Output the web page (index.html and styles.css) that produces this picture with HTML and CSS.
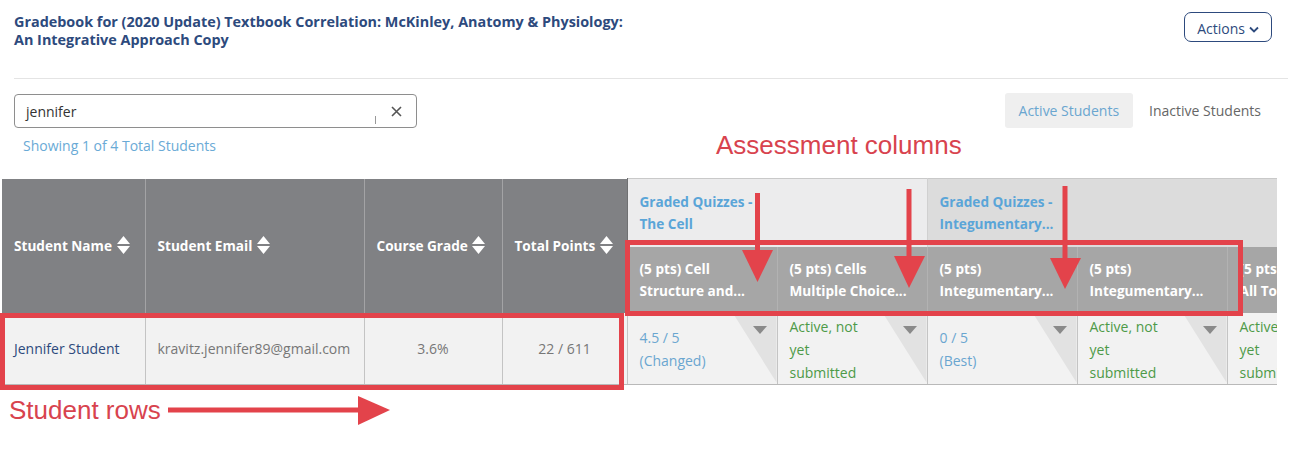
FILE: index.html
```html
<!DOCTYPE html>
<html lang="en">
<head>
<meta charset="utf-8">
<title>Gradebook</title>
<link rel="stylesheet" href="styles.css">
</head>
<body>
<div class="page">
  <header class="top">
    <h1 class="title">Gradebook for (2020 Update) Textbook Correlation: McKinley, Anatomy &amp; Physiology:<br>An Integrative Approach Copy</h1>
    <button class="actions">Actions <svg class="chev" width="10" height="7" viewBox="0 0 10 7"><path d="M1 1.5 L5 5.5 L9 1.5" fill="none" stroke="currentColor" stroke-width="1.8"/></svg></button>
  </header>
  <hr class="divider">
  <div class="toolbar">
    <div class="search-block">
      <div class="search">
        <span class="search-text">jennifer</span>
        <span class="cursor-mark"></span>
        <svg class="clear" width="11" height="11" viewBox="0 0 11 11"><path d="M1 1 L10 10 M10 1 L1 10" stroke="#555" stroke-width="1.6"/></svg>
      </div>
      <div class="showing">Showing 1 of 4 Total Students</div>
    </div>
    <div class="tabs">
      <span class="tab tab-active">Active Students</span>
      <span class="tab">Inactive Students</span>
    </div>
  </div>

  <div class="grid-wrap">
    <table class="grid">
      <colgroup>
        <col class="c-name"><col class="c-email"><col class="c-grade"><col class="c-points">
        <col class="c-a"><col class="c-a"><col class="c-a"><col class="c-a"><col class="c-a">
      </colgroup>
      <thead>
        <tr class="r-group">
          <th rowspan="2" class="fixed-h">Student Name <svg class="sort" width="13" height="18" viewBox="0 0 13 18"><path d="M0 8 L6.5 0 L13 8 Z M0 10 L13 10 L6.5 18 Z" fill="#fff"/></svg></th>
          <th rowspan="2" class="fixed-h">Student Email <svg class="sort" width="13" height="18" viewBox="0 0 13 18"><path d="M0 8 L6.5 0 L13 8 Z M0 10 L13 10 L6.5 18 Z" fill="#fff"/></svg></th>
          <th rowspan="2" class="fixed-h">Course Grade <svg class="sort" width="13" height="18" viewBox="0 0 13 18"><path d="M0 8 L6.5 0 L13 8 Z M0 10 L13 10 L6.5 18 Z" fill="#fff"/></svg></th>
          <th rowspan="2" class="fixed-h">Total Points <svg class="sort" width="13" height="18" viewBox="0 0 13 18"><path d="M0 8 L6.5 0 L13 8 Z M0 10 L13 10 L6.5 18 Z" fill="#fff"/></svg></th>
          <th colspan="2" class="group-h g1">Graded Quizzes -<br>The Cell</th>
          <th colspan="3" class="group-h g2">Graded Quizzes -<br>Integumentary...</th>
        </tr>
        <tr class="r-sub">
          <th class="sub-h">(5 pts) Cell<br>Structure and...</th>
          <th class="sub-h">(5 pts) Cells<br>Multiple Choice...</th>
          <th class="sub-h">(5 pts)<br>Integumentary...</th>
          <th class="sub-h">(5 pts)<br>Integumentary...</th>
          <th class="sub-h">(5 pts)<br>All Topics...</th>
        </tr>
      </thead>
      <tbody>
        <tr>
          <td class="cell-name">Jennifer Student</td>
          <td class="cell-muted">kravitz.jennifer89@gmail.com</td>
          <td class="cell-muted cell-center">3.6%</td>
          <td class="cell-muted cell-center">22 / 611</td>
          <td class="score"><div class="score-text blue">4.5 / 5<br>(Changed)</div><span class="dd"></span></td>
          <td class="score"><div class="score-text green">Active, not<br>yet<br>submitted</div><span class="dd"></span></td>
          <td class="score"><div class="score-text blue">0 / 5<br>(Best)</div><span class="dd"></span></td>
          <td class="score"><div class="score-text green">Active, not<br>yet<br>submitted</div><span class="dd"></span></td>
          <td class="score"><div class="score-text green">Active, not<br>yet<br>submitted</div><span class="dd"></span></td>
        </tr>
      </tbody>
    </table>
  </div>

  <div class="note note-assess">Assessment columns</div>
  <div class="note note-rows">Student rows</div>
  <div class="box box-sub"></div>
  <div class="box box-row"></div>
  <svg class="anno-svg" width="1291" height="472" viewBox="0 0 1291 472">
    <g fill="#e3434b" stroke="none">
      <rect x="755" y="193" width="5" height="60"/>
      <polygon points="742,250 773,250 757.5,282"/>
      <rect x="906.5" y="189" width="5" height="70"/>
      <polygon points="894,256 925,256 909,288"/>
      <rect x="1062.5" y="186" width="5" height="74"/>
      <polygon points="1050,258 1081,258 1065,289"/>
      <rect x="168" y="407.5" width="192" height="5"/>
      <polygon points="358,396 390,410 358,425"/>
    </g>
  </svg>
</div>
</body>
</html>
```

FILE: styles.css
```css
* { box-sizing: border-box; }

body {
  margin: 0;
  background: #fff;
  font-family: "Open Sans", "Noto Sans", Arial, sans-serif;
  font-size: 13px;
  color: #333;
}

.page {
  position: relative;
  width: 1291px;
  height: 472px;
  overflow: hidden;
}

/* ---------- top header ---------- */
.top {
  display: flex;
  justify-content: space-between;
  align-items: flex-start;
  padding: 12px 19px 0 14px;
}

.title {
  margin: 1px 0 0;
  font-size: 14.4px;
  line-height: 18px;
  font-weight: 700;
  color: #2d4a7d;
}

.actions {
  display: flex;
  align-items: center;
  gap: 4px;
  height: 30px;
  padding: 3px 12px 0 12px;
  border: 1px solid #2d4a7d;
  border-radius: 7px;
  background: #fff;
  color: #2d4a7d;
  font-family: inherit;
  font-size: 14px;
}

.chev { margin-top: 2px; }

.divider {
  margin: 29px 3px 0 14px;
  border: 0;
  border-top: 1px solid #e4e4e4;
  height: 0;
}

/* ---------- toolbar ---------- */
.toolbar {
  display: flex;
  justify-content: space-between;
  align-items: flex-start;
  padding: 15px 16px 0 14px;
}

.search {
  display: flex;
  align-items: center;
  width: 403px;
  height: 34px;
  padding: 1px 14px 0 11px;
  border: 1px solid #8e8e8e;
  border-radius: 4px;
}

.search-text {
  flex: 1;
  font-size: 14px;
  color: #333;
}

.cursor-mark {
  width: 1px;
  height: 8px;
  margin: 17px 15px 0 0;
  background: #999;
}

.showing {
  margin-top: 8px;
  padding-left: 9px;
  line-height: 20px;
  font-size: 14px;
  color: #6aaad6;
}

.tabs {
  display: flex;
  align-items: center;
  gap: 2px;
  margin-top: -1px;
}

.tab {
  display: block;
  padding: 1px 14px 0;
  line-height: 34px;
  font-size: 14px;
  color: #666;
  border-radius: 3px;
}

.tab-active {
  background: #efefef;
  color: #6aa6d0;
}

/* ---------- grid ---------- */
.grid-wrap {
  margin: 22px 0 0 2px;
  width: 1275px;
  overflow: hidden;
}

.grid {
  border-collapse: collapse;
  table-layout: fixed;
  width: 1375px;
}

.c-name { width: 143px; }
.c-email { width: 219px; }
.c-grade { width: 138px; }
.c-points { width: 125px; }
.c-a { width: 150px; }

.grid th {
  text-align: left;
  font-weight: 700;
  white-space: nowrap;
  overflow: hidden;
}

.fixed-h {
  background: #808184;
  color: #fff;
  padding: 0 12px;
  vertical-align: middle;
  border-right: 1px solid #a3a3a5;
  font-size: 13.6px;
}

.fixed-h:nth-child(4) { border-right: 1px solid #6f7072; }

.sort {
  vertical-align: -3px;
  margin-left: 1px;
}

.r-group { height: 68px; }
.r-sub { height: 66px; }

.group-h {
  padding: 0 12px;
  vertical-align: middle;
  color: #5aa5d8;
  line-height: 22px;
  font-size: 13.6px;
  border-top: 1px solid #c9c9c9;
}

.g1 { background: #ececed; border-right: 1px solid #d0d0d0; }
.g2 { background: #dcdcdc; }

.sub-h {
  background: #a6a6a6;
  color: #fff;
  padding: 1px 12px 0;
  line-height: 22px;
  font-size: 13.6px;
  vertical-align: middle;
  border-right: 1px solid #b2b2b2;
}

.grid td {
  height: 70px;
  padding: 0 12px;
  background: #f2f2f2;
  border-right: 1px solid #c4c4c4;
  border-bottom: 1px solid #b9b9b9;
  vertical-align: middle;
  white-space: nowrap;
  font-size: 14px;
}

.cell-name { color: #2d4a7d; }
.cell-muted { color: #777; }
.cell-center { text-align: center; }

.score {
  position: relative;
  overflow: hidden;
}

.score::before {
  content: "";
  position: absolute;
  top: 0;
  right: 0;
  width: 44px;
  height: 70px;
  background: #e2e2e2;
  clip-path: polygon(0 0, 100% 0, 100% 100%);
}

.score-text {
  position: relative;
  padding-top: 2px;
  line-height: 23px;
  font-size: 14px;
}

.blue { color: #6aa6d0; }
.green { color: #4d9a48; }

.dd {
  position: absolute;
  top: 13px;
  right: 10px;
  width: 0;
  height: 0;
  border-left: 7px solid transparent;
  border-right: 7px solid transparent;
  border-top: 8px solid #8a8a8a;
}

/* ---------- annotations (overlay) ---------- */
.note {
  position: absolute;
  font-family: "Liberation Sans", Arial, sans-serif;
  font-size: 26px;
  color: #d8434e;
  line-height: 30px;
}

.note-assess { left: 716px; top: 130px; }
.note-rows { left: 9px; top: 395px; }

.box {
  position: absolute;
  border: 5px solid #e3434b;
}

.box-sub { left: 625px; top: 240px; width: 618px; height: 76px; }
.box-row { left: 0; top: 313px; width: 624px; height: 77px; }

.anno-svg {
  position: absolute;
  left: 0;
  top: 0;
  pointer-events: none;
}
```
